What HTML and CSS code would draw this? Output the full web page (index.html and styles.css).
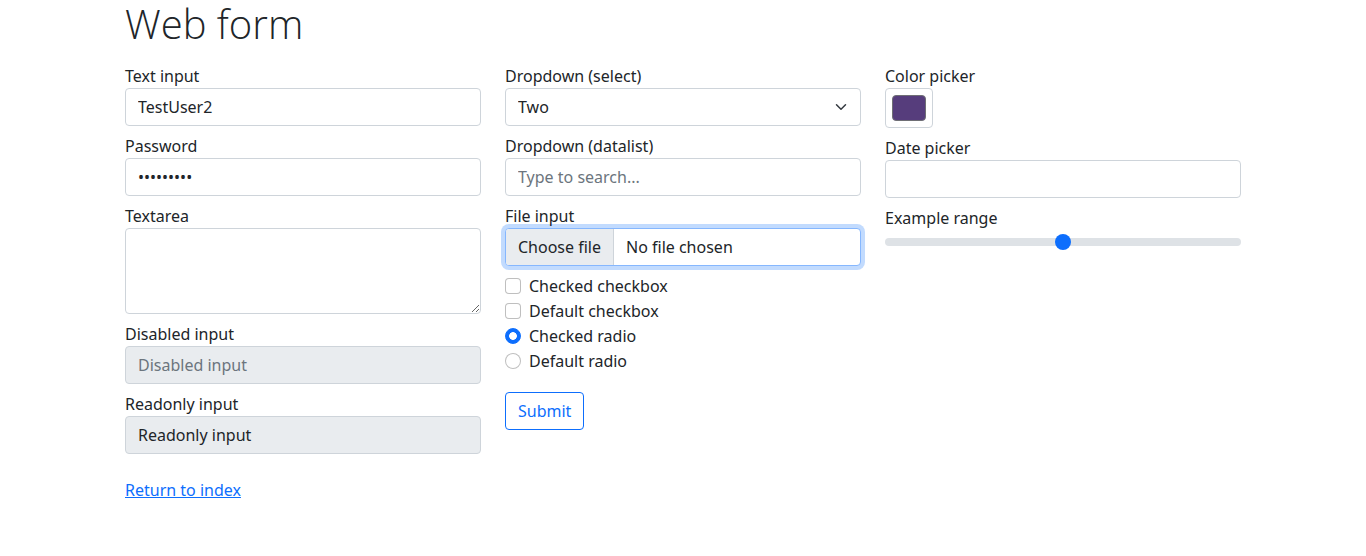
FILE: index.html
```html
<!DOCTYPE html>
<html lang="en">
<head>
<meta charset="utf-8">
<title>Web form</title>
<link rel="stylesheet" href="styles.css">
</head>
<body>
<div class="container">
  <h1 class="title">Web form</h1>
  <form class="form-grid" onsubmit="return false">
    <div class="col">
      <label class="field">Text input
        <input class="control" type="text" name="my-text" value="TestUser2">
      </label>
      <label class="field">Password
        <input class="control" type="password" name="my-password" value="123456789">
      </label>
      <label class="field">Textarea
        <textarea class="control textarea" name="my-textarea" rows="3"></textarea>
      </label>
      <label class="field">Disabled input
        <input class="control" type="text" name="my-disabled" placeholder="Disabled input" disabled>
      </label>
      <label class="field">Readonly input
        <input class="control readonly" type="text" name="my-readonly" value="Readonly input" readonly>
      </label>
    </div>
    <div class="col">
      <label class="field">Dropdown (select)
        <span class="select-wrap">
          <select class="control select" name="my-select">
            <option value="1">One</option>
            <option value="2" selected>Two</option>
            <option value="3">Three</option>
          </select>
          <svg class="chevron" width="16" height="12" viewBox="0 0 16 16" aria-hidden="true"><path fill="none" stroke="#343a40" stroke-linecap="round" stroke-linejoin="round" stroke-width="2" d="m2 5 6 6 6-6"/></svg>
        </span>
      </label>
      <label class="field">Dropdown (datalist)
        <input class="control" type="text" name="my-datalist" placeholder="Type to search...">
      </label>
      <div class="field">
        <div>File input</div>
        <div class="control file is-focused">
          <span class="file-btn">Choose file</span>
          <span class="file-name">No file chosen</span>
        </div>
      </div>
      <div class="check">
        <label><input class="check-input" type="checkbox" name="my-check">Checked checkbox</label>
      </div>
      <div class="check">
        <label><input class="check-input" type="checkbox" name="my-check">Default checkbox</label>
      </div>
      <div class="check">
        <label><input class="check-input radio" type="radio" name="my-radio" checked>Checked radio</label>
      </div>
      <div class="check">
        <label><input class="check-input radio" type="radio" name="my-radio">Default radio</label>
      </div>
      <div class="submit-row">
        <button type="submit" class="btn-outline">Submit</button>
      </div>
    </div>
    <div class="col">
      <label class="field">Color picker
        <input class="control color" type="color" name="my-colors" value="#563d7c">
      </label>
      <label class="field">Date picker
        <input class="control" type="text" name="my-date">
      </label>
      <label class="field">Example range
        <input class="range" type="range" name="my-range" min="0" max="10" step="1" value="5">
      </label>
    </div>
  </form>
  <div class="footer-row">
    <a class="link" href="#">Return to index</a>
  </div>
</div>
</body>
</html>
```
FILE: styles.css
```css
* { box-sizing: border-box; }
html, body { margin: 0; padding: 0; background: #fff; }
body {
  font-family: "Noto Sans", "Open Sans", sans-serif;
  font-size: 16px;
  line-height: 1.5;
  color: #212529;
}
.container { width: 1116px; margin: 0 auto; }
.title {
  margin: 0 0 8px;
  padding-top: 1px;
  height: 48px;
  font-family: "Open Sans", "Noto Sans", sans-serif;
  font-size: 40px;
  font-weight: 300;
  line-height: 46px;
}
.form-grid {
  display: grid;
  grid-template-columns: repeat(3, 1fr);
  column-gap: 24px;
}
.col { padding: 8px 0; }
.field { display: block; margin-bottom: 8px; }
.control {
  display: block;
  width: 100%;
  height: 38px;
  padding: 6px 12px;
  font: inherit;
  font-size: 16px;
  line-height: 24px;
  color: #212529;
  background: #fff;
  border: 1px solid #ced4da;
  border-radius: 4px;
  appearance: none;
  outline: none;
  margin: 0;
}
.control::placeholder { color: #6c757d; opacity: 1; }
.control:disabled, .readonly { background: #e9ecef; }
.textarea { height: 86px; resize: vertical; }
.select-wrap { position: relative; display: block; }
.select { padding-right: 36px; }
.chevron { position: absolute; right: 12px; top: 13px; pointer-events: none; }
.file {
  display: flex;
  align-items: stretch;
  padding: 0;
  overflow: hidden;
}
.file-btn {
  display: flex;
  align-items: center;
  padding: 0 12px;
  background: #e9ecef;
  border-right: 1px solid #ced4da;
  line-height: 24px;
}
.file-name {
  display: flex;
  align-items: center;
  padding-left: 12px;
  line-height: 24px;
}
.is-focused {
  border-color: #86b7fe;
  box-shadow: 0 0 0 4px rgba(13, 110, 253, .25);
}
.check {
  display: block;
  min-height: 24px;
  padding-left: 24px;
  margin-bottom: 1px;
}
.check-input {
  float: left;
  width: 16px;
  height: 16px;
  margin: 4px 0 0 -24px;
  appearance: none;
  background: #fff;
  border: 1px solid rgba(0, 0, 0, .25);
  border-radius: 4px;
}
.radio { border-radius: 50%; }
.radio:checked {
  border-color: #0d6efd;
  background: radial-gradient(circle, #fff 0 3.5px, #0d6efd 4.2px);
}
.submit-row { padding-top: 18px; }
.btn-outline {
  display: inline-block;
  padding: 6px 12px;
  font: inherit;
  font-size: 16px;
  line-height: 24px;
  color: #0d6efd;
  background: transparent;
  border: 1px solid #0d6efd;
  border-radius: 4px;
}
.color {
  width: 48px;
  height: 40px;
  padding: 6px;
}
.color::-webkit-color-swatch-wrapper { padding: 0; }
.color::-webkit-color-swatch { border: 1px solid #6f6f75; border-radius: 4px; }
.range {
  display: block;
  width: 100%;
  height: 24px;
  margin: 0;
  padding: 0;
  background: transparent;
  appearance: none;
}
.range::-webkit-slider-runnable-track {
  height: 8px;
  background: #dee2e6;
  border-radius: 16px;
}
.range::-webkit-slider-thumb {
  appearance: none;
  width: 16px;
  height: 16px;
  margin-top: -4px;
  background: #0d6efd;
  border: 0;
  border-radius: 50%;
}
.footer-row { margin-top: 8px; }
.link { color: #0d6efd; text-decoration: underline; }
```
